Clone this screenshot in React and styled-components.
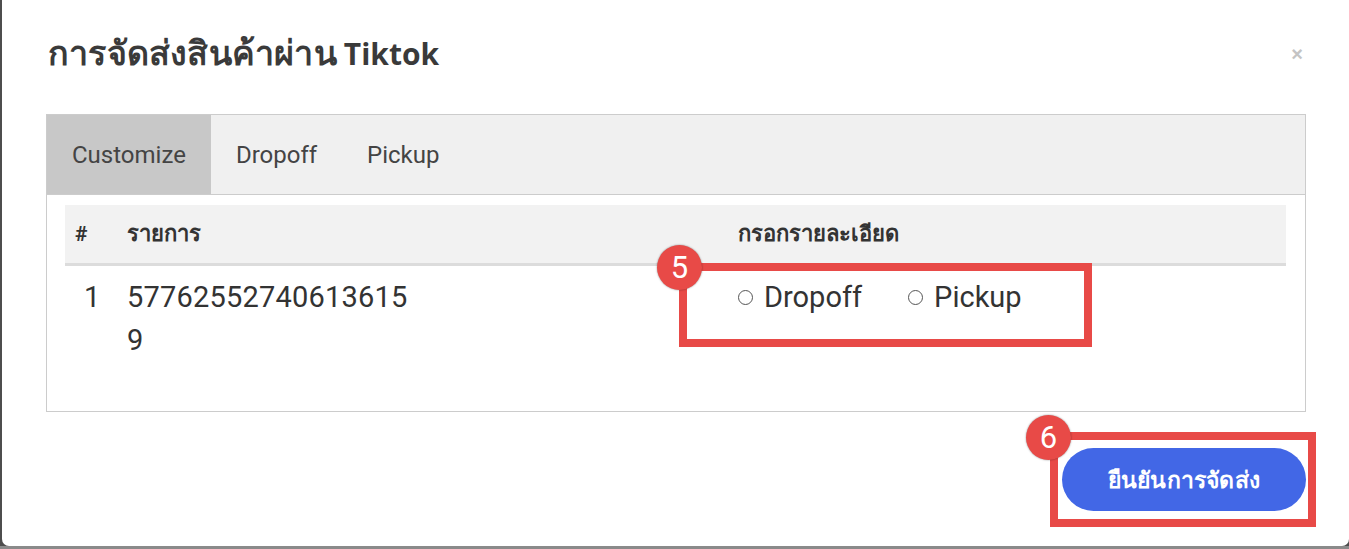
import React from "react";
import styled, { createGlobalStyle } from "styled-components";

const Global = createGlobalStyle`
  html, body { margin: 0; padding: 0; }
  body {
    background: #4d4d4d;
    font-family: Roboto, "Noto Sans", "Open Sans", sans-serif;
    overflow: hidden;
  }
`;

const Page = styled.div`
  width: 1349px;
  height: 549px;
  padding-left: 2px;
  box-sizing: border-box;
  background: linear-gradient(to bottom, #4d4d4d 0, #4d4d4d 546px, #8a8a8a 546px);
`;

const Modal = styled.div`
  position: relative;
  width: 1347px;
  height: 546px;
  background: #fff;
  border-radius: 0 0 7px 7px;
  padding: 0 43px 0 44px;
  box-sizing: border-box;
  display: flex;
  flex-direction: column;
`;

const Header = styled.div`
  height: 106px;
  display: flex;
  align-items: center;
  justify-content: space-between;
`;

const Title = styled.h4`
  margin: 0 0 0 2px;
  font-family: "Open Sans", "Noto Sans", sans-serif;
  font-weight: 700;
  font-size: 30px;
  color: #3a3a3a;
  display: flex;
  align-items: baseline;
  gap: 7px;
`;

const ThaiPart = styled.span`
  font-size: 34px;
  letter-spacing: 0.2px;
`;

const Close = styled.button`
  border: 0;
  background: none;
  padding: 0;
  margin-right: 3px;
  margin-top: 2px;
  font-family: "Liberation Sans", sans-serif;
  font-size: 20px;
  font-weight: 700;
  color: #c4c4c4;
  line-height: 1;
  cursor: pointer;
`;

const Panel = styled.div`
  margin-top: 8px;
  border: 1px solid #cccccc;
  height: 298px;
  box-sizing: border-box;
`;

const TabBar = styled.div`
  display: flex;
  height: 79px;
  background: #f0f0f0;
  border-bottom: 1px solid #cccccc;
`;

const Tab = styled.div`
  display: flex;
  align-items: center;
  padding: 0 25px;
  font-size: 24px;
  color: #444;
  background: ${(p) => (p.$active ? "#c8c8c8" : "transparent")};
`;

const Body = styled.div`
  padding: 10px 19px 0 18px;
`;

const Table = styled.table`
  width: 100%;
  border-collapse: collapse;
`;

const Th = styled.th`
  text-align: left;
  height: 59px;
  padding: 0 10px;
  background: #f2f2f2;
  border-bottom: 3px solid #dcdcdc;
  font-size: ${(p) => p.$fs || "21px"};
  font-weight: 700;
  color: #333;
  width: ${(p) => p.$w || "auto"};
  box-sizing: border-box;
`;

const Td = styled.td`
  vertical-align: top;
  padding: 10px 10px;
  padding-left: ${(p) => p.$pl || "10px"};
  font-size: 29px;
  line-height: 43px;
  color: #333;
`;

const Wrap = styled.div`
  width: 285px;
  word-break: break-all;
  letter-spacing: 0.2px;
`;

const Radios = styled.div`
  display: flex;
  align-items: center;
  gap: 46px;
`;

const RadioLabel = styled.label`
  display: flex;
  align-items: center;
  gap: 11px;
  font-size: 29px;
  color: #333;
`;

const Circle = styled.span`
  width: 13px;
  height: 13px;
  border: 1.5px solid #555;
  border-radius: 50%;
  margin-top: 1px;
`;

const Footer = styled.div`
  display: flex;
  justify-content: flex-end;
  margin-top: 36px;
`;

const Confirm = styled.button`
  width: 244px;
  height: 63px;
  border: 0;
  border-radius: 32px;
  background: #4267e6;
  color: #fff;
  font-family: "Open Sans", "Noto Sans", sans-serif;
  font-weight: 700;
  font-size: 23px;
  letter-spacing: 0.2px;
`;

const Mark = styled.div`
  position: absolute;
  left: ${(p) => p.$x}px;
  top: ${(p) => p.$y}px;
  width: ${(p) => p.$w}px;
  height: ${(p) => p.$h}px;
  border: 8px solid #e84a47;
  box-sizing: border-box;
  pointer-events: none;
`;

const Badge = styled.div`
  position: absolute;
  left: ${(p) => p.$x}px;
  top: ${(p) => p.$y}px;
  width: 45px;
  height: 45px;
  border-radius: 50%;
  background: #e84a47;
  color: #fff;
  font-family: Roboto, sans-serif;
  font-size: 31px;
  display: flex;
  align-items: center;
  justify-content: center;
  box-shadow: 0 0 2px rgba(0, 0, 0, 0.45);
`;

export default function App() {
  return (
    <>
      <Global />
      <Page>
        <Modal>
          <Header>
            <Title>
              <ThaiPart>การจัดส่งสินค้าผ่าน</ThaiPart>
              <span>Tiktok</span>
            </Title>
            <Close>×</Close>
          </Header>
          <Panel>
            <TabBar>
              <Tab $active>Customize</Tab>
              <Tab>Dropoff</Tab>
              <Tab>Pickup</Tab>
            </TabBar>
            <Body>
              <Table>
                <thead>
                  <tr>
                    <Th $w="52px">#</Th>
                    <Th $w="611px" $fs="22px">รายการ</Th>
                    <Th $fs="22px">กรอกรายละเอียด</Th>
                  </tr>
                </thead>
                <tbody>
                  <tr>
                    <Td $pl="19px">1</Td>
                    <Td>
                      <Wrap>577625527406136159</Wrap>
                    </Td>
                    <Td>
                      <Radios>
                        <RadioLabel>
                          <Circle />
                          Dropoff
                        </RadioLabel>
                        <RadioLabel>
                          <Circle />
                          Pickup
                        </RadioLabel>
                      </Radios>
                    </Td>
                  </tr>
                </tbody>
              </Table>
            </Body>
          </Panel>
          <Footer>
            <Confirm>ยืนยันการจัดส่ง</Confirm>
          </Footer>
          <Mark $x={677} $y={263} $w={413} $h={84} />
          <Badge $x={655} $y={245}>5</Badge>
          <Mark $x={1048} $y={432} $w={266} $h={95} />
          <Badge $x={1024} $y={415}>6</Badge>
        </Modal>
      </Page>
    </>
  );
}
